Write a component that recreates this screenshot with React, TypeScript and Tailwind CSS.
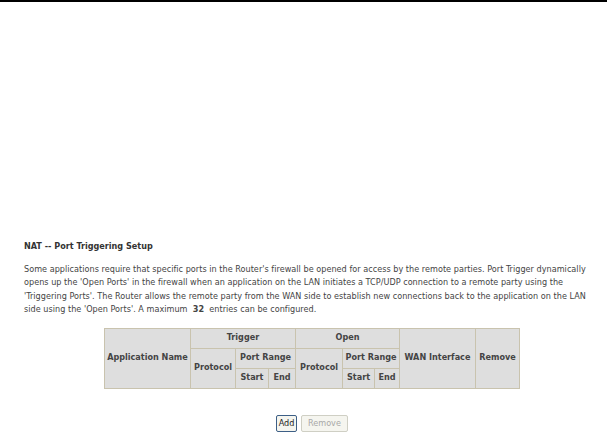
export default function App() {
  const font = { fontFamily: '"DejaVu Sans Condensed", "DejaVu Sans", Tahoma, sans-serif' };
  const th = "border border-[#c9c3ae] bg-[#dedede] text-[#444] font-bold text-center p-0 align-middle whitespace-nowrap overflow-visible";
  return (
    <div className="w-[607px] h-[437px] bg-white overflow-hidden" style={font}>
      <div className="h-[2px] bg-black" />
      <div className="ml-[24px] w-[576px] pt-[238px]">
        <div className="text-[9px] font-bold text-[#333] leading-[13px] whitespace-nowrap">NAT -- Port Triggering Setup</div>
        <p className="mt-[10px] text-[9px] tracking-[0.03px] leading-[13.4px] text-[#444] whitespace-nowrap">
          Some applications require that specific ports in the Router's firewall be opened for access by the remote parties. Port Trigger dynamically<br />
          opens up the 'Open Ports' in the firewall when an application on the LAN initiates a TCP/UDP connection to a remote party using the<br />
          'Triggering Ports'. The Router allows the remote party from the WAN side to establish new connections back to the application on the LAN<br />
          side using the 'Open Ports'. A maximum&nbsp; <b>32</b>&nbsp; entries can be configured.
        </p>
        <div className="flex justify-center mt-[11px]">
          <table className="border-collapse border border-[#aaa58f] text-[9px]" style={{ tableLayout: "fixed", width: 415 }}>
            <colgroup>
              <col style={{ width: 86 }} />
              <col style={{ width: 45 }} />
              <col style={{ width: 33 }} />
              <col style={{ width: 27 }} />
              <col style={{ width: 47 }} />
              <col style={{ width: 32 }} />
              <col style={{ width: 25 }} />
              <col style={{ width: 76 }} />
              <col style={{ width: 44 }} />
            </colgroup>
            <tbody>
              <tr className="h-[20px]">
                <td rowSpan={3} className={th}>Application Name</td>
                <td colSpan={3} className={th}>Trigger</td>
                <td colSpan={3} className={th}>Open</td>
                <td rowSpan={3} className={th}>WAN Interface</td>
                <td rowSpan={3} className={th}>Remove</td>
              </tr>
              <tr className="h-[20px]">
                <td rowSpan={2} className={th}>Protocol</td>
                <td colSpan={2} className={th}>Port Range</td>
                <td rowSpan={2} className={th}>Protocol</td>
                <td colSpan={2} className={th}>Port Range</td>
              </tr>
              <tr className="h-[20px]">
                <td className={th}>Start</td>
                <td className={th}>End</td>
                <td className={th}>Start</td>
                <td className={th}>End</td>
              </tr>
            </tbody>
          </table>
        </div>
        <div className="flex justify-center gap-[4px] mt-[26px]">
          <button className="h-[17px] w-[21px] p-0 text-[9px] leading-none text-[#222] bg-[#f5f5ef] border border-[#3d5f86] rounded-[2px]" style={font}>Add</button>
          <button disabled className="h-[17px] w-[47px] p-0 text-[9px] leading-none text-[#a8a8a8] bg-[#f5f5ef] border border-[#cfcfc4] rounded-[2px]" style={font}>Remove</button>
        </div>
      </div>
    </div>
  );
}
